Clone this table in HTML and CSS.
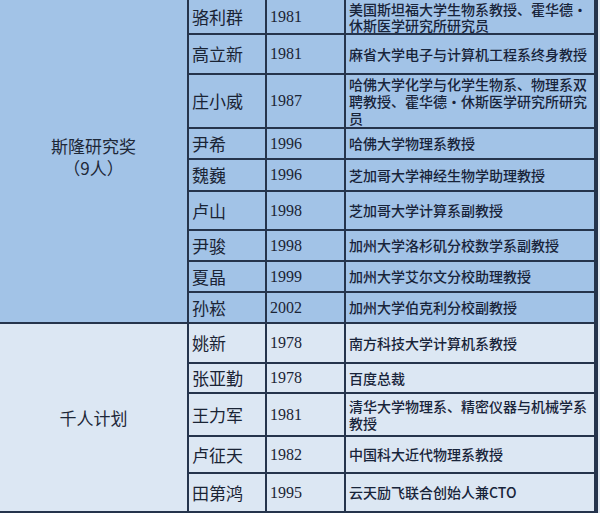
FILE: index.html
```html
<!DOCTYPE html>
<html lang="zh-CN">
<head>
<meta charset="utf-8">
<title>斯隆研究奖 / 千人计划</title>
<link rel="stylesheet" href="styles.css">
</head>
<body>
<div class="table">
  <div class="cat sec1"><span>斯隆研究奖</span><span>（9人）</span></div>
  <div class="name sec1">骆利群</div><div class="year sec1">1981</div><div class="desc sec1 tight">美国斯坦福大学生物系教授、霍华德·休斯医学研究所研究员</div>
  <div class="name sec1">高立新</div><div class="year sec1">1981</div><div class="desc sec1">麻省大学电子与计算机工程系终身教授</div>
  <div class="name sec1">庄小威</div><div class="year sec1">1987</div><div class="desc sec1">哈佛大学化学与化学生物系、物理系双聘教授、霍华德·休斯医学研究所研究员</div>
  <div class="name sec1">尹希</div><div class="year sec1">1996</div><div class="desc sec1">哈佛大学物理系教授</div>
  <div class="name sec1">魏巍</div><div class="year sec1">1996</div><div class="desc sec1">芝加哥大学神经生物学助理教授</div>
  <div class="name sec1">卢山</div><div class="year sec1">1998</div><div class="desc sec1">芝加哥大学计算系副教授</div>
  <div class="name sec1">尹骏</div><div class="year sec1">1998</div><div class="desc sec1">加州大学洛杉矶分校数学系副教授</div>
  <div class="name sec1">夏晶</div><div class="year sec1">1999</div><div class="desc sec1">加州大学艾尔文分校助理教授</div>
  <div class="name sec1">孙崧</div><div class="year sec1">2002</div><div class="desc sec1">加州大学伯克利分校副教授</div>

  <div class="cat sec2"><span>千人计划</span></div>
  <div class="name sec2">姚新</div><div class="year sec2">1978</div><div class="desc sec2">南方科技大学计算机系教授</div>
  <div class="name sec2">张亚勤</div><div class="year sec2">1978</div><div class="desc sec2">百度总裁</div>
  <div class="name sec2">王力军</div><div class="year sec2">1981</div><div class="desc sec2">清华大学物理系、精密仪器与机械学系教授</div>
  <div class="name sec2">卢征天</div><div class="year sec2">1982</div><div class="desc sec2">中国科大近代物理系教授</div>
  <div class="name sec2">田第鸿</div><div class="year sec2">1995</div><div class="desc sec2">云天励飞联合创始人兼CTO</div>
</div>
</body>
</html>
```

FILE: styles.css
```css
html, body {
  margin: 0;
  padding: 0;
  background: #e6edf5;
}

body {
  width: 600px;
  height: 513px;
  overflow: hidden;
  font-family: "Noto Sans CJK SC", "Noto Sans", sans-serif;
  color: #1a2435;
}

.table {
  width: 596px;
  display: grid;
  grid-template-columns: 187px 76px 77px 248px;
  grid-template-rows: 33px 38px 52px 29px 30px 37px 29px 29px 29px 38px 28px 41px 35px 37px;
  column-gap: 2px;
  row-gap: 2px;
  padding: 0 2px 2px 0;
  background: #25344c;
}

.sec1 {
  background: #a2c3e7;
}

.sec2 {
  background: #dce7f3;
}

.cat {
  grid-row: span 9;
  display: flex;
  flex-direction: column;
  align-items: center;
  justify-content: center;
  text-align: center;
  font-size: 17px;
  line-height: 22px;
  color: #1e2838;
  padding-bottom: 8px;
}

.cat.sec2 {
  grid-row: span 5;
  padding-bottom: 0;
}

.name,
.year,
.desc {
  display: flex;
  align-items: center;
  overflow: hidden;
}

.name {
  padding-left: 3px;
  font-size: 17px;
  line-height: 20px;
}

.year {
  padding-left: 3px;
  font-family: "Liberation Serif", "Times New Roman", serif;
  font-size: 16px;
}

.desc {
  padding: 0 5px 0 3px;
  font-size: 14px;
  line-height: 17px;
  font-weight: 500;
  color: #18243a;
}

.desc.tight {
  line-height: 16px;
}
```
